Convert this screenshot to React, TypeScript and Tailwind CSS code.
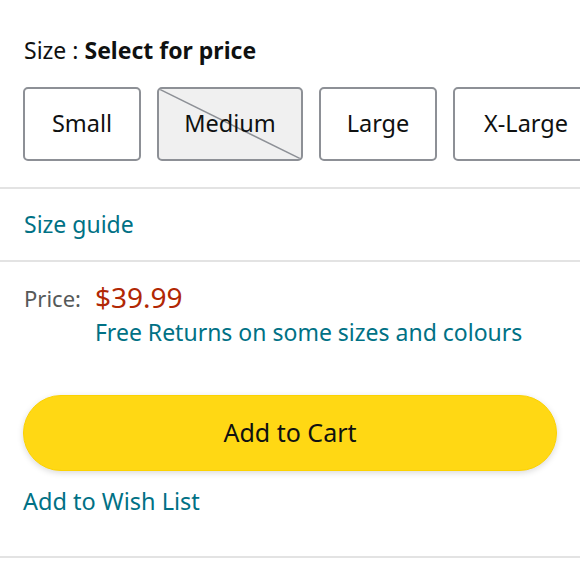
const sizes = [
  { label: 'Small', width: 'w-[118px]', unavailable: false },
  { label: 'Medium', width: 'w-[146px]', unavailable: true },
  { label: 'Large', width: 'w-[118px]', unavailable: false },
  { label: 'X-Large', width: 'w-[146px]', unavailable: false },
]

function SizeOption({ label, width, unavailable }: { label: string; width: string; unavailable: boolean }) {
  return (
    <button
      className={`relative shrink-0 ${width} h-[74px] rounded-[5px] border-2 border-[#8d9096] text-[23.5px] leading-[30px] pb-[2px] text-[#0f1111] overflow-hidden ${
        unavailable ? 'bg-[#f0f0f0]' : 'bg-white'
      }`}
    >
      {unavailable && (
        <svg className="absolute inset-0 w-full h-full" preserveAspectRatio="none" viewBox="0 0 100 100">
          <line x1="0" y1="0" x2="100" y2="100" stroke="#8d9096" strokeWidth="1.5" vectorEffect="non-scaling-stroke" />
        </svg>
      )}
      <span className="relative">{label}</span>
    </button>
  )
}

export default function App() {
  return (
    <div className="w-[580px] h-[580px] overflow-hidden bg-white" style={{ fontFamily: '"Noto Sans", Arial, sans-serif' }}>
      {/* Size selector */}
      <div className="pl-6 pt-[34px]">
        <div className="text-[23px] leading-[32px] text-[#0f1111]">
          Size : <span className="font-bold">Select for price</span>
        </div>
        <div className="flex gap-4 mt-[21px] -ml-[1px]">
          {sizes.map((s) => (
            <SizeOption key={s.label} {...s} />
          ))}
        </div>
      </div>

      <div className="h-[2px] bg-[#e3e3e3] mt-[26px]" />

      {/* Size guide */}
      <div className="pl-6 h-[71px] flex items-center">
        <a className="text-[23px] text-[#007185]">Size guide</a>
      </div>

      <div className="h-[2px] bg-[#e3e3e3]" />

      {/* Price */}
      <div className="pl-6 pt-[17px] flex gap-[14px]">
        <div className="text-[22px] leading-[36px] pt-[1px] text-[#565959]">Price:</div>
        <div>
          <div className="text-[28px] leading-[36px] text-[#b12704]">$39.99</div>
          <div className="text-[23px] leading-[32px] text-[#007185] mt-[1px]">Free Returns on some sizes and colours</div>
        </div>
      </div>

      {/* Actions */}
      <div className="px-[23px] pt-[47px]">
        <button className="w-full h-[76px] rounded-full bg-[#ffd814] border border-[#fcd200] shadow-[0_2px_6px_rgba(0,0,0,0.15)] text-[25px] text-[#0f1111]">
          Add to Cart
        </button>
        <a className="block mt-[14px] text-[23.5px] leading-[32px] text-[#007185]">Add to Wish List</a>
      </div>

      <div className="h-[2px] bg-[#e3e3e3] mt-[39px]" />
    </div>
  )
}
